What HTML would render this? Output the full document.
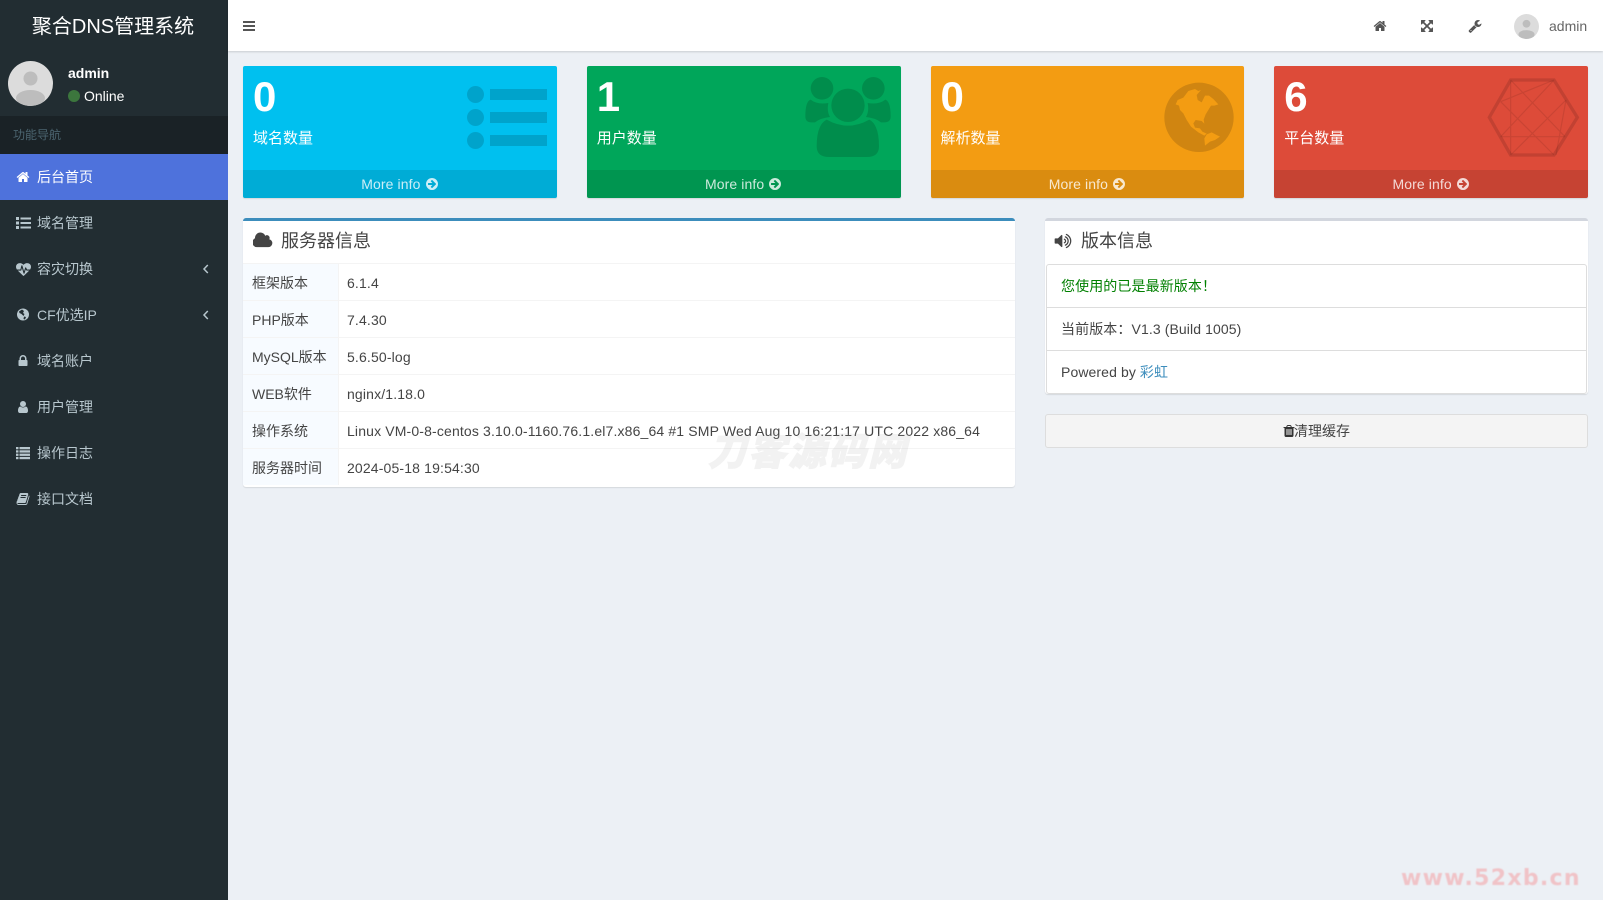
<!DOCTYPE html>
<html lang="zh"><head><meta charset="utf-8"><title>聚合DNS管理系统</title>
<style>
*{box-sizing:border-box}
html,body{margin:0;padding:0;width:1603px;height:900px;overflow:hidden}
body{background:#ecf0f5;font-family:"Liberation Sans","Noto Sans CJK SC",sans-serif;font-size:14px;color:#333;position:relative}
.a{position:absolute;white-space:nowrap}
svg{position:absolute;display:block}
#side{left:0;top:0;width:228px;height:900px;background:#222d32}
#top{left:228px;top:0;width:1375px;height:51px;background:#fff;box-shadow:0 1px 2px rgba(0,0,0,.15)}
.nav{left:0;width:228px;height:46px;line-height:46px;color:#b8c7ce;padding-left:37px}
.box{top:66px;height:132px;width:313.75px;border-radius:2px;box-shadow:0 1px 1px rgba(0,0,0,.1);color:#fff;overflow:hidden}
.box .n{position:absolute;left:10px;top:10px;font-size:42px;font-weight:bold;line-height:42px}
.box .l{position:absolute;left:10px;top:62px;font-size:15px;line-height:21px}
.box .f{position:absolute;left:0;right:0;top:104px;height:28px;line-height:28px;background:rgba(0,0,0,.1);color:rgba(255,255,255,.8);text-align:center;letter-spacing:.1px}
.box .f svg{position:static;display:inline-block;vertical-align:-2px;width:14px;height:14px}
.panel{background:#fff;border-radius:3px;box-shadow:0 1px 1px rgba(0,0,0,.1);border-top:3px solid #d2d6de}
.t{font-size:18px;line-height:24px;color:#444}
.row{left:243px;width:772px;height:37px;border-top:1px solid #f4f4f4;line-height:38px;color:#444}
.row b{position:absolute;left:0;top:0;width:95px;height:36px;background:#f7fbff;font-weight:normal;padding-left:9px;color:#444}
.row i{position:absolute;left:95px;top:0;width:1px;height:36px;background:#f4f4f4}
.row span{position:absolute;left:104px;top:0;letter-spacing:.15px}
.li{left:1046px;width:541px;height:44px;line-height:43px;padding-left:14px;color:#444;background:#fff;border:1px solid #ddd;letter-spacing:.1px}
</style></head><body>

<div class="a" id="side"></div>
<div class="a" style="left:-1px;top:2px;width:228px;height:51px;line-height:51px;text-align:center;color:#fff;font-size:20px">聚合DNS管理系统</div>
<svg style="left:8px;top:61px" width="45" height="45" viewBox="0 0 45 45"><defs><clipPath id="c1"><circle cx="22.500" cy="22.500" r="22.500"/></clipPath></defs><circle cx="22.500" cy="22.500" r="22.500" fill="#dcdcdc"/><g clip-path="url(#c1)" fill="#bdbdbd"><circle cx="22.500" cy="17.500" r="7"/><ellipse cx="22.500" cy="37" rx="14.500" ry="8"/></g></svg>
<div class="a" style="left:68px;top:63px;line-height:20px;color:#fff;font-weight:bold">admin</div>
<div class="a" style="left:68px;top:90px;width:12px;height:12px;border-radius:50%;background:#3c763d"></div>
<div class="a" style="left:84px;top:86px;line-height:20px;color:#fff">Online</div>
<div class="a" style="left:0;top:116px;width:228px;height:38px;background:#1a2226;color:#4b646f;font-size:12px;line-height:38px;padding-left:13px">功能导航</div>

<div class="a nav" style="top:154px;background:#4e72dc;color:#fff">后台首页</div>
<svg style="left:16px;top:170px" width="14" height="14" viewBox="0 0 1792 1792" fill="#fff"><path d="M1472 992v480q0 26-19 45t-45 19h-384v-384h-256v384h-384q-26 0-45-19t-19-45v-480q0-1 .5-3t.5-3l575-474 575 474q1 2 1 6zm223-69l-62 74q-8 9-21 11h-3q-13 0-21-7l-692-577-692 577q-12 8-24 7-13-2-21-11l-62-74q-8-10-7-23.500t11-21.500l719-599q32-26 76-26t76 26l244 204v-195q0-14 9-23t23-9h192q14 0 23 9t9 23v408l219 182q10 8 11 21.500t-7 23.500z"/></svg>

<div class="a nav" style="top:200px">域名管理</div>
<svg style="left:16px;top:216px" width="15" height="14" viewBox="0 0 15 14" fill="#b8c7ce"><rect x="0" y="1" width="3" height="3"/><rect x="0" y="5.500" width="3" height="3"/><rect x="0" y="10" width="3" height="3"/><rect x="4.500" y="1.500" width="10.500" height="2"/><rect x="4.500" y="6" width="10.500" height="2"/><rect x="4.500" y="10.500" width="10.500" height="2"/></svg>

<div class="a nav" style="top:246px">容灾切换</div>
<svg style="left:16px;top:262px" width="15" height="15" viewBox="0 0 1792 1792" fill="#b8c7ce"><path d="M1280 1024h305q-5 6-10 10.500t-9 7.500l-3 4-623 600q-18 18-44 18t-44-18l-624-602q-5-2-21-20h369q22 0 39.500-13.500t22.500-34.500l70-281 190 667q6 20 23 33t39 13q21 0 38-13t23-33l146-485 56 112q18 35 57 35zm512-428q0 145-103 300h-369l-111-221q-8-17-25.500-27t-36.500-8q-45 5-56 46l-129 430-196-686q-6-20-23.500-33t-39.500-13-39 13.500-22 34.500l-116 464h-423q-103-155-103-300 0-220 127-344t351-124q62 0 126.500 21.500t120 58 95.500 68.500 76 68q36-36 76-68t95.500-68.500 120-58 126.500-21.500q224 0 351 124t127 344z"/></svg>
<svg style="left:202px;top:264px" width="8" height="10" viewBox="0 0 8 10"><polyline points="5.800,1 2,5 5.800,9" fill="none" stroke="#b8c7ce" stroke-width="1.500"/></svg>

<div class="a nav" style="top:292px">CF优选IP</div>
<svg style="left:17px;top:308px" width="12" height="13" viewBox="0 0 12 13"><circle cx="6" cy="6.500" r="6" fill="#b8c7ce"/><path d="M2 3.500L5 1.500 7 3 6 5 7.500 6 6.500 8 4.500 6 2.500 5zM7 8.500L9 9 8 11.500 6.500 11z" fill="#222d32"/></svg>
<svg style="left:202px;top:310px" width="8" height="10" viewBox="0 0 8 10"><polyline points="5.800,1 2,5 5.800,9" fill="none" stroke="#b8c7ce" stroke-width="1.500"/></svg>

<div class="a nav" style="top:338px">域名账户</div>
<svg style="left:16px;top:354px" width="14" height="14" viewBox="0 0 1792 1792" fill="#b8c7ce"><path d="M640 768h512v-192q0-106-75-181t-181-75-181 75-75 181v192zm832 96v576q0 40-28 68t-68 28h-960q-40 0-68-28t-28-68v-576q0-40 28-68t68-28h32v-192q0-184 132-316t316-132 316 132 132 316v192h32q40 0 68 28t28 68z"/></svg>

<div class="a nav" style="top:384px">用户管理</div>
<svg style="left:16px;top:400px" width="14" height="14" viewBox="0 0 1792 1792" fill="#b8c7ce"><path d="M1536 1399q0 109-62.500 187t-150.500 78h-854q-88 0-150.500-78t-62.500-187q0-85 8.500-160.500t31.500-152 58.500-131 94-89 134.500-34.500q131 128 313 128t313-128q76 0 134.500 34.500t94 89 58.500 131 31.500 152 8.500 160.500zm-256-887q0 159-112.500 271.500t-271.500 112.500-271.500-112.500-112.500-271.500 112.500-271.500 271.500-112.500 271.500 112.500 112.500 271.500z"/></svg>

<div class="a nav" style="top:430px">操作日志</div>
<svg style="left:16px;top:446px" width="14" height="14" viewBox="0 0 14 14" fill="#b8c7ce"><rect x="0" y="1" width="2.500" height="2.300"/><rect x="0" y="4.300" width="2.500" height="2.300"/><rect x="0" y="7.600" width="2.500" height="2.300"/><rect x="0" y="10.900" width="2.500" height="2.300"/><rect x="3.500" y="1" width="10.500" height="2.300"/><rect x="3.500" y="4.300" width="10.500" height="2.300"/><rect x="3.500" y="7.600" width="10.500" height="2.300"/><rect x="3.500" y="10.900" width="10.500" height="2.300"/></svg>

<div class="a nav" style="top:476px">接口文档</div>
<svg style="left:16px;top:492px" width="14" height="14" viewBox="0 0 1792 1792" fill="#b8c7ce"><path d="M1703 478q40 57 18 129l-275 906q-19 64-76.500 107.500t-122.500 43.500h-923q-77 0-148.500-53.500t-99.500-131.500q-24-67-2-127 0-4 3-27t4-37q1-8-3-21.500t-3-19.500q2-11 8-21t16.500-23.500 16.500-23.500q23-38 45-91.500t30-91.500q3-10 .5-30t-.5-28q3-11 17-28t17-23q21-36 42-92t25-90q1-9-2.500-32t.500-28q4-13 22-30.500t22-22.500q19-26 42.500-84.500t27.500-96.500q1-8-3-25.500t-2-26.500q2-8 9-18t18-23 17-21q8-12 16.500-30.500t15-35 16-36 19.500-32 26.500-23.500 36-11.500 47.500 5.500l-1 3q38-9 51-9h761q74 0 114 56t18 130l-274 906q-36 119-71.500 153.500t-128.500 34.500h-869q-27 0-38 15-11 16-1 43 24 70 144 70h923q29 0 56-15.500t35-41.500l300-987q7-22 5-57 38 15 59 43zm-1064 2q-4 13 2 22.500t20 9.500h608q13 0 25.500-9.500t16.500-22.500l21-64q4-13-2-22.500t-20-9.500h-608q-13 0-25.500 9.500t-16.500 22.500zm-83 256q-4 13 2 22.500t20 9.500h608q13 0 25.500-9.500t16.500-22.500l21-64q4-13-2-22.500t-20-9.500h-608q-13 0-25.500 9.500t-16.500 22.500z"/></svg>

<div class="a" id="top"></div>
<svg style="left:243px;top:21px" width="12" height="10" viewBox="0 0 12 10" fill="#555"><rect width="12" height="2"/><rect y="4" width="12" height="2"/><rect y="8" width="12" height="2"/></svg>
<svg style="left:1372.500px;top:19px" width="14" height="14" viewBox="0 0 1792 1792" fill="#555"><path d="M1472 992v480q0 26-19 45t-45 19h-384v-384h-256v384h-384q-26 0-45-19t-19-45v-480q0-1 .5-3t.5-3l575-474 575 474q1 2 1 6zm223-69l-62 74q-8 9-21 11h-3q-13 0-21-7l-692-577-692 577q-12 8-24 7-13-2-21-11l-62-74q-8-10-7-23.500t11-21.500l719-599q32-26 76-26t76 26l244 204v-195q0-14 9-23t23-9h192q14 0 23 9t9 23v408l219 182q10 8 11 21.500t-7 23.500z"/></svg>
<svg style="left:1420px;top:19px" width="14" height="14" viewBox="0 0 1792 1792" fill="#555"><path d="M1411 541l-355 355 355 355 144-144q29-31 70-14 39 17 39 59v448q0 26-19 45t-45 19h-448q-42 0-59-40-17-39 14-69l144-144-355-355-355 355 144 144q31 30 14 69-17 40-59 40h-448q-26 0-45-19t-19-45v-448q0-42 40-59 39-17 69 14l144 144 355-355-355-355-144 144q-19 19-45 19-12 0-24-5-40-17-40-59v-448q0-26 19-45t45-19h448q42 0 59 40 17 39-14 69l-144 144 355 355 355-355-144-144q-31-30-14-69 17-40 59-40h448q26 0 45 19t19 45v448q0 42-39 59-13 5-25 5-26 0-45-19z"/></svg>
<svg style="left:1468px;top:19px" width="14" height="14" viewBox="0 0 1792 1792" fill="#555"><path d="M448 1472q0-26-19-45t-45-19-45 19-19 45 19 45 45 19 45-19 19-45zm644-420l-682 682q-37 37-90 37-52 0-91-37l-106-108q-38-36-38-90 0-53 38-91l681-681q39 98 114.500 173.500t173.500 114.500zm634-435q0 39-23 106-47 134-164.500 217.500t-258.500 83.500q-185 0-316.500-131.500t-131.500-316.500 131.500-316.500 316.500-131.500q58 0 121.500 16.500t107.500 46.500q16 11 16 28t-16 28l-293 169v224l193 107q5-3 79-48.500t135.500-81 70.500-35.500q15 0 23.500 10t8.500 25z"/></svg>
<svg style="left:1514px;top:14px" width="25" height="25" viewBox="0 0 45 45"><defs><clipPath id="c2"><circle cx="22.500" cy="22.500" r="22.500"/></clipPath></defs><circle cx="22.500" cy="22.500" r="22.500" fill="#dcdcdc"/><g clip-path="url(#c2)" fill="#bdbdbd"><circle cx="22.500" cy="17.500" r="7"/><ellipse cx="22.500" cy="37" rx="14.500" ry="8"/></g></svg>
<div class="a" style="left:1549px;top:16px;line-height:20px;color:#666">admin</div>

<!-- boxes -->
<div class="a box" style="left:243px;background:#00c0ef"><div class="n">0</div><div class="l">域名数量</div><div class="f">More info <svg viewBox="0 0 1792 1792" fill="currentColor"><path fill-rule="evenodd" d="M1413 896q0-27-18-45l-91-91-362-362q-18-18-45-18t-45 18l-91 91q-18 18-18 45t18 45l189 189h-502q-26 0-45 19t-19 45v128q0 26 19 45t45 19h502l-189 189q-19 19-19 45t19 45l91 91q18 18 45 18t45-18l362-362 91-91q18-18 18-45zm251 0q0 209-103 385.500t-279.500 279.500-385.500 103-385.500-103-279.500-279.500-103-385.500 103-385.500 279.500-279.500 385.500-103 385.500 103 279.500 279.500 103 385.500z"/></svg></div></div>
<div class="a box" style="left:586.750px;background:#00a65a"><div class="n">1</div><div class="l">用户数量</div><div class="f">More info <svg viewBox="0 0 1792 1792" fill="currentColor"><path fill-rule="evenodd" d="M1413 896q0-27-18-45l-91-91-362-362q-18-18-45-18t-45 18l-91 91q-18 18-18 45t18 45l189 189h-502q-26 0-45 19t-19 45v128q0 26 19 45t45 19h502l-189 189q-19 19-19 45t19 45l91 91q18 18 45 18t45-18l362-362 91-91q18-18 18-45zm251 0q0 209-103 385.500t-279.500 279.500-385.500 103-385.500-103-279.500-279.500-103-385.500 103-385.500 279.500-279.500 385.500-103 385.500 103 279.500 279.500 103 385.500z"/></svg></div></div>
<div class="a box" style="left:930.500px;background:#f39c12"><div class="n">0</div><div class="l">解析数量</div><div class="f">More info <svg viewBox="0 0 1792 1792" fill="currentColor"><path fill-rule="evenodd" d="M1413 896q0-27-18-45l-91-91-362-362q-18-18-45-18t-45 18l-91 91q-18 18-18 45t18 45l189 189h-502q-26 0-45 19t-19 45v128q0 26 19 45t45 19h502l-189 189q-19 19-19 45t19 45l91 91q18 18 45 18t45-18l362-362 91-91q18-18 18-45zm251 0q0 209-103 385.500t-279.500 279.500-385.500 103-385.500-103-279.500-279.500-103-385.500 103-385.500 279.500-279.500 385.500-103 385.500 103 279.500 279.500 103 385.500z"/></svg></div></div>
<div class="a box" style="left:1274.250px;background:#dd4b39"><div class="n">6</div><div class="l">平台数量</div><div class="f">More info <svg viewBox="0 0 1792 1792" fill="currentColor"><path fill-rule="evenodd" d="M1413 896q0-27-18-45l-91-91-362-362q-18-18-45-18t-45 18l-91 91q-18 18-18 45t18 45l189 189h-502q-26 0-45 19t-19 45v128q0 26 19 45t45 19h502l-189 189q-19 19-19 45t19 45l91 91q18 18 45 18t45-18l362-362 91-91q18-18 18-45zm251 0q0 209-103 385.500t-279.500 279.500-385.500 103-385.500-103-279.500-279.500-103-385.500 103-385.500 279.500-279.500 385.500-103 385.500 103 279.500 279.500 103 385.500z"/></svg></div></div>

<!-- box art -->
<svg style="left:460px;top:80px" width="100" height="70" viewBox="460 80 100 70" fill="rgba(0,0,0,.15)"><circle cx="475.500" cy="94.500" r="8.500"/><circle cx="475.500" cy="117.500" r="8.500"/><circle cx="475.500" cy="140.500" r="8.500"/><rect x="490" y="89" width="57" height="11"/><rect x="490" y="112" width="57" height="11"/><rect x="490" y="135" width="57" height="11"/></svg>
<svg style="left:800px;top:73.330px" width="96.670" height="86.670" viewBox="1200 70 290 260" fill="rgba(0,0,0,.15)"><path d="M1232 116a34 34 0 1 0 68 0a34 34 0 1 0 -68 0zM1386 116a34 34 0 1 0 68 0a34 34 0 1 0 -68 0zM1294 167a50 50 0 1 0 100 0a50 50 0 1 0 -100 0zM1280 210Q1344 246 1408 210Q1437 225 1437 290Q1437 322 1400 322H1288Q1250 322 1250 290Q1250 225 1280 210ZM1232 150Q1252 166 1285 160Q1280 185 1290 202Q1262 205 1245 218H1234Q1216 218 1216 200Q1216 155 1232 150ZM1456 150Q1436 166 1403 160Q1408 185 1398 202Q1426 205 1443 218H1454Q1472 218 1472 200Q1472 155 1456 150Z"/></svg>
<svg style="left:1155px;top:75px" width="90" height="85" viewBox="0 0 270 255"><circle cx="132" cy="127" r="104" fill="#d08511"/><path d="M62 88L68 75 85 68 100 48 120 42 130 48 138 45 125 60 128 75 140 82 150 62 162 62 175 72 190 88 178 92 168 92 160 105 152 118 146 134 148 146 140 138 122 135 115 145 120 158 135 160 142 170 155 176 148 182 130 172 108 155 95 135 85 115 75 105 72 92Z M148 190L155 178 170 172 185 180 195 185 180 195 165 200 150 212Z" fill="#f39c12"/></svg>
<svg style="left:1480px;top:70px" width="100" height="90" viewBox="0 0 300 270" fill="none"><path d="M92 30H222L292 142 222 255H92L28 142Z" stroke="rgba(0,0,0,.12)" stroke-width="10"/><path d="M92 30V255M62 95L222 30M92 30L255 200M222 30L62 200M258 90L92 255M62 95L222 255M62 200H255M258 90L228 255" stroke="rgba(0,0,0,.09)" stroke-width="3.500"/></svg>

<!-- server panel -->
<div class="a panel" style="left:243px;top:218px;width:772px;height:269px;border-top-color:#3c8dbc"></div>
<svg style="left:253px;top:231px" width="20" height="19" viewBox="0 0 1920 1792" fill="#444"><path d="M1856 1152q0 159-112.500 271.500t-271.500 112.500h-1088q-185 0-316.500-131.500t-131.500-316.500q0-132 71-241.500t187-163.500q-2-28-2-43 0-212 150-362t362-150q158 0 286.500 88t187.500 230q70-62 166-62 106 0 181 75t75 181q0 75-41 138 129 30 213 134.500t84 239.500z"/></svg>
<div class="a t" style="left:281px;top:229px">服务器信息</div>
<div class="a row" style="top:263px"><b>框架版本</b><i></i><span>6.1.4</span></div>
<div class="a row" style="top:300px"><b>PHP版本</b><i></i><span>7.4.30</span></div>
<div class="a row" style="top:337px"><b>MySQL版本</b><i></i><span>5.6.50-log</span></div>
<div class="a row" style="top:374px"><b>WEB软件</b><i></i><span>nginx/1.18.0</span></div>
<div class="a row" style="top:411px"><b>操作系统</b><i></i><span>Linux VM-0-8-centos 3.10.0-1160.76.1.el7.x86_64 #1 SMP Wed Aug 10 16:21:17 UTC 2022 x86_64</span></div>
<div class="a row" style="top:448px"><b>服务器时间</b><i></i><span>2024-05-18 19:54:30</span></div>

<!-- version panel -->
<div class="a panel" style="left:1045px;top:218px;width:543px;height:176px"></div>
<svg style="left:1054px;top:232px" width="18" height="18" viewBox="0 0 1792 1792" fill="#444"><path d="M832 352v1088q0 26-19 45t-45 19-45-19l-333-333h-262q-26 0-45-19t-19-45v-384q0-26 19-45t45-19h262l333-333q19-19 45-19t45 19 19 45zm384 544q0 76-42.500 141.500t-112.500 93.500q-10 5-25 5-26 0-45-18.500t-19-45.500q0-21 12-35.500t29-25 34-23 29-36 12-56.500-12-56.500-29-36-34-23-29-25-12-35.500q0-27 19-45.500t45-18.500q15 0 25 5 70 27 112.500 93t42.500 142zm256 0q0 153-85 282.500t-225 188.500q-13 5-25 5-27 0-46-19t-19-45q0-39 39-59 56-29 76-44 74-54 115.500-135.500t41.500-173.500-41.500-173.500-115.500-135.500q-20-15-76-44-39-20-39-59 0-26 19-45t45-19q13 0 26 5 140 59 225 188.500t85 282.500zm256 0q0 230-127 422.500t-338 283.500q-13 5-26 5-26 0-45-19t-19-45q0-36 39-59 7-4 22.500-10.500t22.500-10.500q46-25 82-51 123-91 192-227t69-289-69-289-192-227q-36-26-82-51-7-4-22.500-10.500t-22.500-10.500q-39-23-39-59 0-26 19-45t45-19q13 0 26 5 211 91 338 283.500t127 422.500z"/></svg>
<div class="a t" style="left:1081px;top:229px">版本信息</div>
<div class="a li" style="top:264px;border-radius:3px 3px 0 0;color:#008000">您使用的已是最新版本！</div>
<div class="a li" style="top:307px">当前版本：V1.3 (Build 1005)</div>
<div class="a li" style="top:350px;border-radius:0 0 3px 3px">Powered by <span style="color:#3c8dbc">彩虹</span></div>
<div class="a" style="left:1045px;top:414px;width:543px;height:34px;background:#f4f4f4;border:1px solid #ddd;border-radius:3px;text-align:center;line-height:32px;color:#444;padding-left:11px">清理缓存</div>
<svg style="left:1282px;top:424px" width="14" height="14" viewBox="0 0 1792 1792" fill="#333"><path d="M704 1376v-704q0-14-9-23t-23-9h-64q-14 0-23 9t-9 23v704q0 14 9 23t23 9h64q14 0 23-9t9-23zm256 0v-704q0-14-9-23t-23-9h-64q-14 0-23 9t-9 23v704q0 14 9 23t23 9h64q14 0 23-9t9-23zm256 0v-704q0-14-9-23t-23-9h-64q-14 0-23 9t-9 23v704q0 14 9 23t23 9h64q14 0 23-9t9-23zm-544-992h448l-48-117q-7-9-17-11h-317q-10 2-17 11zm928 32v64q0 14-9 23t-23 9h-96v948q0 83-47 143.500t-113 60.500h-832q-66 0-113-58.500t-47-141.500v-952h-96q-14 0-23-9t-9-23v-64q0-14 9-23t23-9h309l70-167q15-37 54-63t79-26h320q40 0 79 26t54 63l70 167h309q14 0 23 9t9 23z"/></svg>

<!-- watermarks -->
<div class="a" style="left:708px;top:427px;font-size:38px;line-height:44px;font-weight:900;font-style:italic;color:#b4b4b4;opacity:.16;-webkit-text-stroke:1px #b4b4b4;font-family:'Noto Sans CJK SC',sans-serif;letter-spacing:2px">刀客源码网</div>
<div class="a" style="left:1401px;top:865px;font-family:'DejaVu Sans',sans-serif;font-weight:bold;font-size:22px;line-height:28px;color:#f0c3c7;letter-spacing:1.300px;filter:blur(.6px)">www.52xb.cn</div>
</body></html>
